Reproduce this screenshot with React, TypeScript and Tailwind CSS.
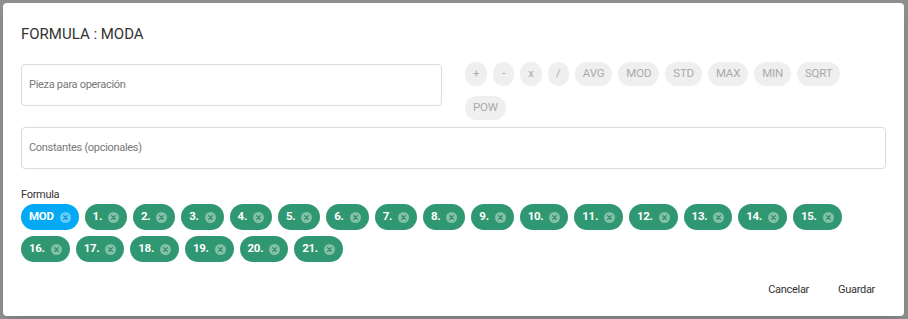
import React from 'react';

const operators = ['+', '-', 'x', '/', 'AVG', 'MOD', 'STD', 'MAX', 'MIN', 'SQRT', 'POW'];
const pieces = Array.from({ length: 21 }, (_, i) => `${i + 1}.`);

function CloseDot({ color }: { color: string }) {
  return (
    <svg width="11" height="11" viewBox="0 0 12 12" className="shrink-0">
      <circle cx="6" cy="6" r="6" fill="white" fillOpacity="0.4" />
      <path d="M4 4 L8 8 M8 4 L4 8" stroke={color} strokeWidth="1.3" strokeLinecap="round" />
    </svg>
  );
}

function Chip({ label, blue }: { label: string; blue?: boolean }) {
  return (
    <div
      className={`flex items-center h-[26px] rounded-full pl-[8px] pr-[8px] gap-[6px] text-white text-[11.5px] tracking-[-0.3px] font-bold ${
        blue ? 'bg-[#03a9f4]' : 'bg-[#2f9771]'
      }`}
    >
      <span>{label}</span>
      <CloseDot color={blue ? '#0392d4' : '#2a8a66'} />
    </div>
  );
}

export default function App() {
  return (
    <div className="w-[908px] h-[319px] bg-[#8f8f8f] pt-[3px] pl-[3px] font-['Roboto',sans-serif]">
      <div className="w-[901px] h-[313px] bg-white rounded-[4px] shadow-lg px-[18px] pt-[22px] flex flex-col">
        <h2 className="text-[15px] leading-[18px] text-[#333]">FORMULA : MODA</h2>

        <div className="flex gap-[23px] mt-[19px]">
          <div className="w-[421px] h-[42px] mt-[2px] border border-[#dcdcdc] rounded-[4px] flex items-center pl-[7px] text-[11px] tracking-[-0.3px] text-[#777]">
            Pieza para operación
          </div>
          <div className="w-[400px] flex flex-wrap gap-x-[6px] gap-y-[10px]">
            {operators.map((op) => (
              <div
                key={op}
                className="h-[24px] min-w-[21px] px-[8px] rounded-full bg-[#efefef] text-[#aaa] text-[11.5px] tracking-[-0.2px] flex items-center justify-center"
              >
                {op}
              </div>
            ))}
          </div>
        </div>

        <div className="w-[865px] h-[42px] mt-[7px] border border-[#dcdcdc] rounded-[4px] flex items-center pl-[7px] text-[11px] tracking-[-0.3px] text-[#777]">
          Constantes (opcionales)
        </div>

        <div className="mt-[19px] text-[11px] tracking-[-0.3px] leading-[14px] text-[#333]">Formula</div>
        <div className="w-[865px] mt-[2px] flex flex-wrap gap-[6px]">
          <Chip label="MOD" blue />
          {pieces.map((p) => (
            <Chip key={p} label={p} />
          ))}
        </div>

        <div className="flex justify-end gap-[13px] mt-[10px] pr-[3px]">
          <button className="h-[36px] px-[8px] text-[11px] tracking-[-0.3px] text-[#333]">Cancelar</button>
          <button className="h-[36px] px-[8px] text-[11px] tracking-[-0.3px] text-[#333]">Guardar</button>
        </div>
      </div>
    </div>
  );
}
